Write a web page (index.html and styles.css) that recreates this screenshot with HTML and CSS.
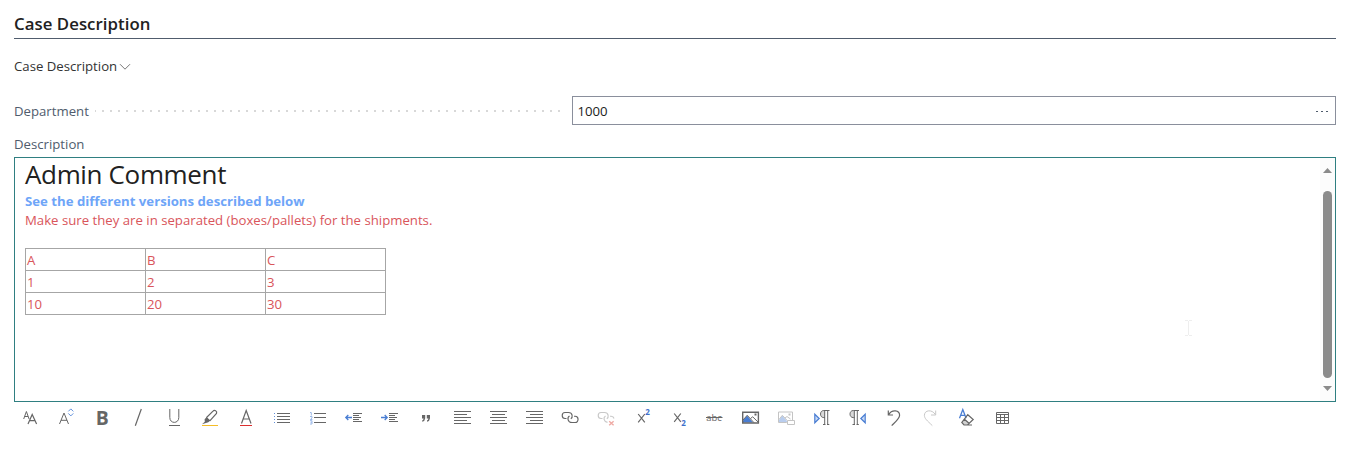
FILE: index.html
```html
<!DOCTYPE html>
<html lang="en">
<head>
<meta charset="utf-8">
<title>Case Description</title>
<link rel="stylesheet" href="styles.css">
</head>
<body>
<main class="card">
  <h2 class="section-title"><span>Case Description</span></h2>
  <div class="group-menu"><span class="group-name">Case Description</span><svg class="chevron" viewBox="0 0 12 8"><path d="M1 1.2 6 6.2 11 1.2"/></svg></div>
  <div class="field-row">
    <div class="field-caption"><span class="label department">Department</span><span class="leader"></span></div>
    <div class="field-input"><span class="value">1000</span><span class="lookup"><i></i><i></i><i></i></span></div>
  </div>
  <div class="label description">Description</div>
  <div class="editor">
    <div class="content">
      <h1 class="heading"><span>Admin Comment</span></h1>
      <p class="note-blue"><span>See the different versions described below</span></p>
      <p class="note-red"><span>Make sure they are in separated (boxes/pallets) for the shipments.</span></p>
      <table class="grid">
        <tr><td>A</td><td>B</td><td>C</td></tr>
        <tr><td>1</td><td>2</td><td>3</td></tr>
        <tr><td>10</td><td>20</td><td>30</td></tr>
      </table>
    </div>
    <div class="scrollbar">
      <svg class="arrow" viewBox="0 0 9 5"><path d="M0 5 4.5 0 9 5z"/></svg>
      <div class="thumb"></div>
      <svg class="arrow" viewBox="0 0 9 5"><path d="M0 0 4.5 5 9 0z"/></svg>
    </div>
    <svg class="pointer" viewBox="0 0 8 16"><path d="M0 .5H3M4 .5H7M3.5 1V15M0 15.5H3M4 15.5H7"/></svg>
  </div>
  <div class="toolbar">
    <svg viewBox="0 0 20 20"><path d="M3.7 11 6.4 3.5 9.1 11M4.7 8.5H8"/><path d="M8 16 12.2 6.5 16.6 16M9.6 12.7H15" stroke-width="1.2"/></svg>
    <svg viewBox="0 0 20 20"><path d="M3.5 16 8 5 12.5 16M5 12.3H11"/><path class="blue" d="M12.3 3.4 14.8.9 17.3 3.4M12.3 5.4 14.8 7.9 17.3 5.4"/></svg>
    <svg viewBox="0 0 20 20"><text class="bold" x="3.8" y="16.8" textLength="13" lengthAdjust="spacingAndGlyphs">B</text></svg>
    <svg viewBox="0 0 20 20"><path d="M7.3 17.7 13.3 1" stroke-width="1.2"/></svg>
    <svg viewBox="0 0 20 20"><path d="M5.8 1V9.5C5.8 16 14.8 16 14.8 9.5V1M5 17.5H16"/></svg>
    <svg viewBox="0 0 20 20"><path d="M6.3 9.8 13 3.2C14.4 1.6 17.5 3 16.5 5.4L9.8 12.8M6.3 9.8 9.8 12.8" stroke-width="1.2"/><path class="fill" d="M6.5 9.2 10 12.8 8.3 14.3 2 16.2 4.8 13.7 4.6 11.3z"/><path class="yellow" d="M2 17.5H18"/></svg>
    <svg viewBox="0 0 20 20"><path d="M5.5 15.5 10.2 2.5 15 15.5M7.2 11H13.3" stroke-width="1.2"/><path class="red" d="M4 17.5H16"/></svg>
    <svg viewBox="0 0 20 20"><path d="M5 5.5H18M5 8.5H18M5 11.5H18M5 14.5H18"/><path class="blue" d="M2 5.5H3M2 8.5H3M2 11.5H3M2 14.5H3"/></svg>
    <svg viewBox="0 0 20 20"><path d="M6 5.5H18M6 9.5H18M6 14.5H18"/><path class="pale-blue" d="M2 4.5H3.3V7.5M2 8.5H4V10L2.3 11.5H4.4M2 12.7H4V16H2M2.5 14.3H4"/></svg>
    <svg viewBox="0 0 20 20"><path d="M9 5.5H18M9 7.5H15M9 9.5H17M9 11.5H15M9 13.5H18"/><path class="arrow-blue" d="M8 9.5H1.8M4.3 7 1.8 9.5 4.3 12"/></svg>
    <svg viewBox="0 0 20 20"><path d="M9 5.5H18M9 7.5H15M9 9.5H17M9 11.5H15M9 13.5H18"/><path class="arrow-blue" d="M1 9.5H7.2M4.7 7 7.2 9.5 4.7 12"/></svg>
    <svg viewBox="0 0 20 20"><path class="fill" d="M6 7H9.2V10.2Q9 13 6.2 13.8V12.5Q7.5 12 7.6 10.5H6zM10.8 7H14V10.2Q13.8 13 11 13.8V12.5Q12.3 12 12.4 10.5H10.8z"/></svg>
    <svg viewBox="0 0 20 20"><path d="M2 3.5H19M2 6.5H15M2 9.5H19M2 12.5H15M2 15.5H19"/></svg>
    <svg viewBox="0 0 20 20"><path d="M2 3.5H19M4 6.5H17M2 9.5H19M4 12.5H17M2 15.5H19"/></svg>
    <svg viewBox="0 0 20 20"><path d="M2 3.5H19M6 6.5H19M2 9.5H19M6 12.5H19M2 15.5H19"/></svg>
    <svg viewBox="0 0 20 20"><g stroke-width="1.15"><path d="M6.5 10.5H5C1.3 10.5 1.3 4.5 5 4.5H8.5C12.8 4.5 13 9.5 10.8 10.8"/><path d="M14 8.2H15.2C19 8.2 19 14.5 15.2 14.5H12C7.5 14.5 7 9.5 9.5 8"/></g></svg>
    <svg viewBox="0 0 20 20"><g class="faded" stroke-width="1.15"><path d="M6.5 10.5H5C1.3 10.5 1.3 4.5 5 4.5H8.5C12.8 4.5 13 9.5 10.8 10.8"/><path d="M14 8.2H15.2Q17.5 8.5 18 10.5M11.5 14.4C7.5 13.5 7 9.5 9.5 8"/></g><path class="pale-red" d="M13.2 13.3 17.6 17.3M17.6 13.3 13.2 17.3"/></svg>
    <svg viewBox="0 0 20 20"><path d="M6.2 6 12.8 14.3M12.8 6 6.2 14.3" stroke-width="1.2"/><text class="script" x="13.3" y="6.8">2</text></svg>
    <svg viewBox="0 0 20 20"><path d="M6.2 5.5 12.8 13.8M12.8 5.5 6.2 13.8" stroke-width="1.2"/><text class="script" x="13.3" y="18">2</text></svg>
    <svg viewBox="0 0 20 20"><text class="strike" x="2.3" y="13" textLength="15.5" lengthAdjust="spacingAndGlyphs">abc</text><path d="M2 9.5H18.5"/></svg>
    <svg viewBox="0 0 20 20"><path class="blue-fill" d="M3 12.5 7 7.5 13 14.5H3z"/><path d="M3 12 7.2 7.3 14 14.7M10.5 10.5 12.7 8.8 18 14"/><path class="fill" d="M14.5 5.5H16.5V7.5H14.5z"/><path d="M2.7 4.2H18.4V15H2.7z" stroke-width="1.4"/></svg>
    <svg viewBox="0 0 20 20"><g opacity=".38"><path class="blue-fill" d="M3 12 6.3 7.5 11 13V14H3z"/><path d="M3 11.5 6.3 7.3 11 12.3M9 10 11 8.5 14.5 11M10.8 14.5H2.5V4H16.5V12"/><path class="fill" d="M12.5 5.5H14.5V7.5H12.5z"/><path d="M11.5 12.5H18.5V16.5H11.5z"/></g></svg>
    <svg viewBox="0 0 20 20"><path class="triangle" d="M2.8 6.2 7.2 10.5 2.8 14.8z"/><path class="fill" d="M13 2.8H11C7.6 3 7.6 9.5 11 9.7H13z" opacity=".25"/><path d="M17.5 2.5H11.8C7.4 2.5 7.4 9.6 11.8 9.6H13M12.7 3V16.2M15.7 3V16.2M11 16.5H13.5M15 16.5H17.3"/></svg>
    <svg viewBox="0 0 20 20"><path class="fill" d="M6.5 2.8H5C1.3 3 1.3 9.5 5 9.7H6.5z" opacity=".25"/><path d="M11 2.5H5.3C.9 2.5 .9 9.6 5.3 9.6H6.5M6.3 3V16.2M9.3 3V16.2M4.5 16.5H7M8.5 16.5H10.8"/><path class="triangle" d="M17.2 6.2 12.8 10.5 17.2 14.8z"/></svg>
    <svg viewBox="0 0 20 20"><path d="M4.3 2.5V7H9M4.7 6.5C8 1 15.6 2 15.6 7.3 15.6 10.5 13 12.5 7.7 17.6" stroke-width="1.2"/></svg>
    <svg viewBox="0 0 20 20"><path class="faded" d="M15.7 2.5V7H11M15.3 6.5C12 1 4.4 2 4.4 7.3 4.4 10.5 7 12.5 12.3 17.6"/></svg>
    <svg viewBox="0 0 20 20"><path class="arrow-blue" d="M3.5 10.3 6.8 1.5 10.1 10.3M4.7 7.3H9"/><path d="M11.8 6.7 17.2 11.5 11.5 17H8L5.8 14.5zM8.2 11 13 15.3M8 17H16" stroke-width="1.2"/><path class="fill" d="M8.5 11.2 12.8 15.2 11.2 17H8L5.8 14.3z" opacity=".3"/></svg>
    <svg viewBox="0 0 20 20"><path d="M4.5 4.5H16.5V15.5H4.5zM4 6.5H17M4 9.5H17M4 12.5H17M8.5 6V16M12.5 6V16"/></svg>
  </div>
</main>
</body>
</html>
```
FILE: styles.css
```css
* { box-sizing: border-box; }
body {
  margin: 0;
  background: #fff;
  font: 13.2px/20px "Open Sans", "Noto Sans", sans-serif;
  color: #333;
}
.card { padding: 12px 11px 0 14px; }
.section-title {
  margin: 0;
  height: 27px;
  border-bottom: 1px solid #505c6d;
  font-size: 16.8px;
  font-weight: 600;
  line-height: 23px;
  color: #212121;
  letter-spacing: .05px;
}
.group-menu { display: flex; align-items: center; margin-top: 17px; height: 20px; }
.chevron { width: 12px; height: 8px; margin: 2px 0 0 2px; fill: none; stroke: #777; }
.field-row { display: flex; margin-top: 20px; height: 29px; }
.field-caption { display: flex; width: 558px; align-items: center; }
.label { color: #505c6d; }
.leader {
  width: 465px;
  height: 2px;
  margin: 1px 12px 0 auto;
  background: linear-gradient(90deg, transparent 6px, #d8d8d8 6px) right top / 8px 2px;
}
.field-input {
  display: flex;
  flex: 1;
  align-items: center;
  justify-content: space-between;
  padding: 0 7px 0 4.5px;
  border: 1px solid #8a8f9c;
  color: #212121;
}
.lookup { display: flex; gap: 3px; margin-top: 2px; }
.lookup i { width: 2px; height: 1px; background: #505c6d; }
.description { margin-top: 9px; height: 23px; }
.editor {
  display: flex;
  position: relative;
  height: 245px;
  border: 1px solid #2f7f81;
}
.content { flex: 1; padding: 0 10px; }
.heading {
  margin: 0;
  height: 34px;
  font-size: 26px;
  font-weight: 400;
  line-height: 32px;
  letter-spacing: -.35px;
  color: #212121;
}
.note-blue, .note-red { margin: 0; height: 19px; line-height: 19px; }
.note-blue { color: #6ea5f8; font-weight: 700; }
.note-red, .grid { color: #d9555b; }
.grid { width: 361px; margin-top: 18px; border-collapse: collapse; table-layout: fixed; }
.grid td { height: 22px; padding: 2px 1px 0; border: 1px solid #a6a6a6; line-height: 19px; }
.scrollbar {
  display: flex;
  flex-direction: column;
  align-items: center;
  width: 15px;
  padding: 10px 0;
  background: #fcfcfc;
}
.arrow { width: 9px; height: 5px; fill: #8b8b8b; }
.thumb { width: 9px; height: 187px; margin: 18px 0 8px; border-radius: 5px; background: #8b8b8b; }
.pointer { position: absolute; left: 1170px; top: 162px; width: 8px; height: 16px; fill: none; stroke: #eee; }
.toolbar { display: flex; gap: 16px; padding: 6px 0 0 6px; }
.toolbar svg { flex: none; width: 20px; height: 20px; fill: none; stroke: #666; overflow: visible; }
.toolbar text { stroke: none; fill: #666; }
.toolbar .fill { fill: #666; stroke: none; }
.toolbar .bold { font: 700 20px "Open Sans", sans-serif; }
.toolbar .script { font: 700 8px "Open Sans", sans-serif; fill: #3d6fcb; }
.toolbar .strike { font: 9.5px "Open Sans", sans-serif; }
.toolbar .blue { stroke: #5f8fdc; }
.toolbar .arrow-blue { stroke: #4a7ed3; stroke-width: 1.3; }
.toolbar .pale-blue { stroke: #9dbae8; }
.toolbar .yellow { stroke: #f5bd27; }
.toolbar .red { stroke: #dc2f2f; }
.toolbar .pale-red { stroke: #efaaa4; stroke-width: 1.4; }
.toolbar .blue-fill { fill: #4a7ed3; stroke: none; }
.toolbar .triangle { fill: #c9daf5; stroke: #4a7ed3; stroke-width: 1.2; }
.toolbar .faded { stroke: #c8c8c8; }
```
